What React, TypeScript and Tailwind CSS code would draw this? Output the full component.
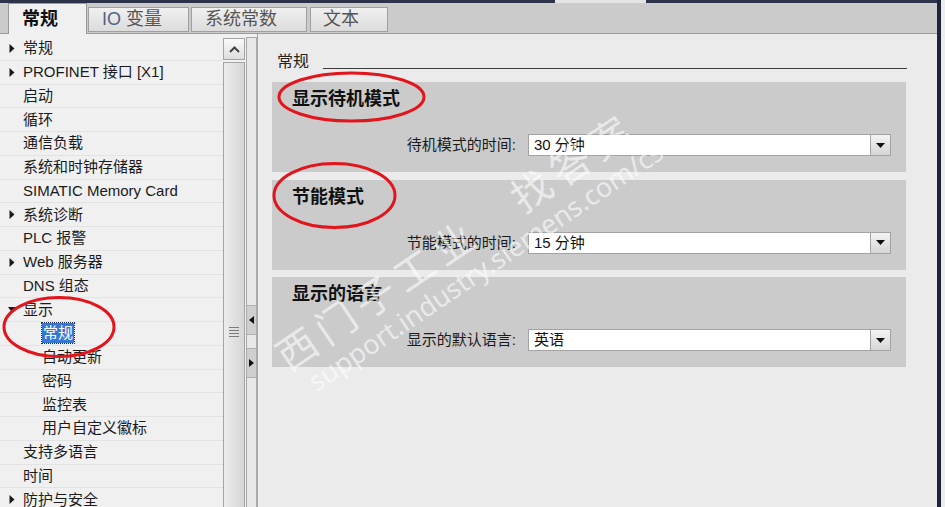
import React from 'react';

type Item = { t: string; arrow?: 'right' | 'down'; child?: boolean; selected?: boolean };

const items: Item[] = [
  { t: '常规', arrow: 'right' },
  { t: 'PROFINET 接口 [X1]', arrow: 'right' },
  { t: '启动' },
  { t: '循环' },
  { t: '通信负载' },
  { t: '系统和时钟存储器' },
  { t: 'SIMATIC Memory Card' },
  { t: '系统诊断', arrow: 'right' },
  { t: 'PLC 报警' },
  { t: 'Web 服务器', arrow: 'right' },
  { t: 'DNS 组态' },
  { t: '显示', arrow: 'down' },
  { t: '常规', child: true, selected: true },
  { t: '自动更新', child: true },
  { t: '密码', child: true },
  { t: '监控表', child: true },
  { t: '用户自定义徽标', child: true },
  { t: '支持多语言' },
  { t: '时间' },
  { t: '防护与安全', arrow: 'right' },
];

const sections = [
  { title: '显示待机模式', label: '待机模式的时间:', value: '30 分钟' },
  { title: '节能模式', label: '节能模式的时间:', value: '15 分钟' },
  { title: '显示的语言', label: '显示的默认语言:', value: '英语' },
];

function Arrow({ dir }: { dir: 'right' | 'down' }) {
  if (dir === 'down') {
    return (
      <svg width="8" height="6" viewBox="0 0 8 6">
        <path d="M0 0H8L4 5.5Z" fill="#1a1a1a" />
      </svg>
    );
  }
  return (
    <svg width="6" height="9" viewBox="0 0 6 9">
      <path d="M0.5 0L5.5 4.5L0.5 9Z" fill="#1a1a1a" />
    </svg>
  );
}

function TreeRow({ item }: { item: Item }) {
  return (
    <div className="h-[23.75px] flex items-center border-b border-[#e3e3e3] text-[15px] leading-[20px] text-[#1b1b1b] whitespace-nowrap">
      {item.child ? (
        <div className="w-[42px] shrink-0" />
      ) : (
        <div className="w-[23px] shrink-0 flex justify-center items-center">
          {item.arrow && <Arrow dir={item.arrow} />}
        </div>
      )}
      {item.selected ? (
        <span className="bg-[#3477d6] text-white px-[1px] outline outline-1 outline-dotted outline-[#1d2f55]">{item.t}</span>
      ) : (
        <span>{item.t}</span>
      )}
    </div>
  );
}

function Select({ value }: { value: string }) {
  return (
    <div className="flex h-[22px] w-[363px]">
      <div className="flex-1 bg-white border border-[#a3a3a3] flex items-center pl-[5px] text-[15px] leading-[20px] text-[#111]">
        {value}
      </div>
      <div className="w-[20px] border border-[#a3a3a3] border-l-0 bg-gradient-to-b from-[#f4f4f4] to-[#d6d6d6] flex items-center justify-center">
        <svg width="9" height="5" viewBox="0 0 9 5">
          <path d="M0 0H9L4.5 5Z" fill="#111" />
        </svg>
      </div>
    </div>
  );
}

export default function App() {
  return (
    <div className="relative w-[945px] h-[507px] overflow-hidden flex bg-[#ececec] font-['Liberation_Sans','Noto_Sans_CJK_SC',sans-serif]">
      <div className="w-[937px] flex flex-col">
        {/* top strip */}
        <div className="h-[3px] flex shrink-0">
          <div className="w-[555px] bg-[#2d3349]" />
          <div className="w-[91px] bg-[#e4e4e4]" />
          <div className="flex-1 bg-[#2d3349]" />
        </div>

        {/* tabs */}
        <div className="h-[31px] shrink-0 bg-[#cbcbcb] border-b border-[#9b9b9b] flex items-end pl-[8px]">
          <div className="w-[79px] h-[31px] -mb-px bg-[#f0f0f0] border border-b-0 border-[#9a9a9a] pl-[13px] flex items-center text-[18px] font-bold text-[#111]">
            常规
          </div>
          <div className="w-[101px] h-[25px] mb-[1px] ml-[1px] bg-gradient-to-b from-[#f0f0f0] to-[#dcdcdc] border border-[#a0a0a0] pl-[13px] flex items-center text-[18px] text-[#555]">
            <span className="text-[#4e6487]">IO</span>&nbsp;变量
          </div>
          <div className="w-[116px] h-[25px] mb-[1px] ml-[2px] bg-gradient-to-b from-[#f0f0f0] to-[#dcdcdc] border border-[#a0a0a0] pl-[13px] flex items-center text-[18px] text-[#555]">
            系统常数
          </div>
          <div className="w-[78px] h-[25px] mb-[1px] ml-[3px] bg-gradient-to-b from-[#f0f0f0] to-[#dcdcdc] border border-[#a0a0a0] pl-[12px] flex items-center text-[18px] text-[#555]">
            文本
          </div>
        </div>

        {/* body */}
        <div className="flex flex-1 min-h-0">
          {/* tree */}
          <div className="w-[223px] shrink-0 bg-[#f0f0f0] pt-[3px]">
            {items.map((it, i) => (
              <TreeRow key={i} item={it} />
            ))}
          </div>

          {/* scrollbar */}
          <div className="w-[23px] shrink-0 bg-[#f0f0f0] pt-[4px] flex flex-col">
            <div className="h-[22px] mr-[1px] border border-[#a4a4a4] bg-gradient-to-b from-[#fafafa] to-[#dedede] flex items-center justify-center">
              <svg width="11" height="7" viewBox="0 0 11 7">
                <path d="M1 6L5.5 1.5L10 6" stroke="#444" strokeWidth="2" fill="none" />
              </svg>
            </div>
            <div className="flex-1 mt-[2px] mr-[1px] border border-b-0 border-[#a4a4a4] bg-gradient-to-r from-[#ececec] to-[#d6d6d6] flex flex-col items-center">
              <div className="mt-[264px] w-[10px] flex flex-col gap-[2px]">
                <div className="h-px bg-[#7a7a7a]" />
                <div className="h-px bg-[#7a7a7a]" />
                <div className="h-px bg-[#7a7a7a]" />
                <div className="h-px bg-[#7a7a7a]" />
              </div>
            </div>
          </div>

          {/* splitter */}
          <div className="w-[11px] shrink-0 pt-[3px] bg-[#f0f0f0] flex flex-col">
            <div className="flex-1 border-l border-r border-t border-[#a8a8a8] bg-[#e8e8e8] flex flex-col">
              <div className="mt-[267px] h-[30px] bg-[#cfcfcf] border-y border-[#b0b0b0] flex items-center justify-center">
                <svg width="5" height="8" viewBox="0 0 5 8">
                  <path d="M5 0V8L0 4Z" fill="#111" />
                </svg>
              </div>
              <div className="mt-[13px] h-[30px] bg-[#cfcfcf] border-y border-[#b0b0b0] flex items-center justify-center">
                <svg width="5" height="8" viewBox="0 0 5 8">
                  <path d="M0 0V8L5 4Z" fill="#111" />
                </svg>
              </div>
            </div>
          </div>

          {/* content */}
          <div className="flex-1 bg-[#ebebeb] border-l border-[#a9a9a9] flex flex-col">
            <div className="mt-[18px] ml-[19px] mr-[30px] flex items-end">
              <span className="text-[16px] leading-[20px] text-[#222]">常规</span>
              <div className="flex-1 h-px bg-[#3c3c3c] ml-[14px] mb-[3px]" />
            </div>
            <div className="mt-[10px] ml-[14px] mr-[31px] flex flex-col gap-[7.5px]">
              {sections.map((s) => (
                <div key={s.title} className="h-[90px] bg-[#cbcbcb] flex flex-col">
                  <div className="pt-[5px] pl-[20px] text-[18px] leading-[24px] font-bold text-[#111]">{s.title}</div>
                  <div className="mt-[23px] flex items-center justify-end gap-[12px] pr-[15px]">
                    <span className="text-[15px] leading-[20px] text-[#1b1b1b]">{s.label}</span>
                    <Select value={s.value} />
                  </div>
                </div>
              ))}
            </div>
          </div>
        </div>
      </div>

      {/* right frame */}
      <div className="w-[4px] bg-[#1f2539]" />
      <div className="w-[4px] bg-[#ededed]" />

      {/* watermark */}
      <div className="absolute left-[310px] top-[326px] origin-bottom-left -rotate-[34deg] pointer-events-none text-white/60 whitespace-nowrap">
        <div className="text-[40px] leading-[46px] tracking-[7px] font-['Noto_Sans_CJK_SC',sans-serif]">西门子工业&nbsp;&nbsp;&nbsp;找答案</div>
        <div className="text-[27px] leading-[32px] pl-[12px] font-['Noto_Sans',sans-serif]">support.industry.siemens.com/cs</div>
      </div>

      {/* red annotations */}
      <svg className="absolute left-0 top-0 pointer-events-none" width="945" height="507" viewBox="0 0 945 507">
        <ellipse cx="351.5" cy="97" rx="72.5" ry="24" fill="none" stroke="#e3141b" strokeWidth="3" />
        <ellipse cx="334.5" cy="195.5" rx="60.5" ry="32" fill="none" stroke="#e3141b" strokeWidth="3" />
        <ellipse cx="59" cy="327" rx="55" ry="29.5" fill="none" stroke="#e3141b" strokeWidth="3" />
      </svg>
    </div>
  );
}
